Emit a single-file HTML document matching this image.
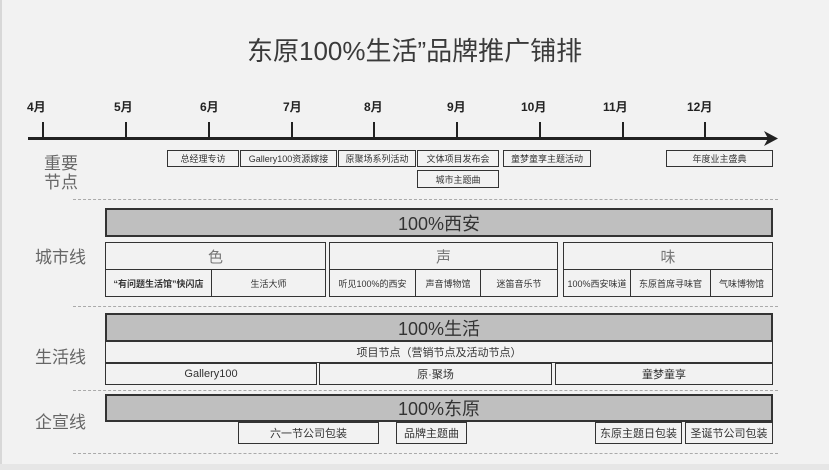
<!DOCTYPE html>
<html><head><meta charset="utf-8"><style>
*{margin:0;padding:0;box-sizing:border-box}
body{width:829px;height:470px;background:#f2f2f2;position:relative;overflow:hidden;font-family:"Liberation Sans","Noto Sans CJK SC",sans-serif;color:#333}
.a{position:absolute}
.b{position:absolute;border:1.5px solid #333;display:flex;align-items:center;justify-content:center;font-size:9px;color:#333;white-space:nowrap;background:#f2f2f2}
.g{background:#bfbfbf;border:2px solid #333;font-size:18px;color:#333}
.m{position:absolute;top:98px;font-size:12px;font-weight:bold;color:#222}
.t{position:absolute;top:122px;width:2px;height:16px;background:#222}
.d{position:absolute;left:73px;width:705px;border-top:1px dashed #aaa}
.l{position:absolute;font-size:17px;color:#666}
</style></head><body>
<div class="a" style="left:0;top:0;width:2px;height:470px;background:#d8d8d8"></div>
<div class="a" style="left:0;top:464px;width:829px;height:6px;background:#e6e6e6"></div>
<div class="a" style="left:247px;top:31px;font-size:26px;color:#3a3a3a;white-space:nowrap">东原100%生活”品牌推广铺排</div>

<div class="m" style="left:27px">4月</div><div class="m" style="left:114px">5月</div><div class="m" style="left:200px">6月</div><div class="m" style="left:283px">7月</div><div class="m" style="left:364px">8月</div><div class="m" style="left:447px">9月</div><div class="m" style="left:521px">10月</div><div class="m" style="left:603px">11月</div><div class="m" style="left:687px">12月</div>
<div class="t" style="left:42px"></div><div class="t" style="left:125px"></div><div class="t" style="left:208px"></div><div class="t" style="left:291px"></div><div class="t" style="left:373px"></div><div class="t" style="left:456px"></div><div class="t" style="left:539px"></div><div class="t" style="left:622px"></div><div class="t" style="left:704px"></div>
<div class="a" style="left:28px;top:137px;width:740px;height:3px;background:#222"></div>
<svg class="a" style="left:764px;top:131px" width="16" height="15"><path d="M0 0 L14 7.5 L0 15 L4 7.5Z" fill="#222"/></svg>

<div class="l" style="left:44px;top:154px;line-height:19px">重要<br>节点</div>
<div class="b" style="left:167px;top:150px;width:72px;height:17px">总经理专访</div>
<div class="b" style="left:240px;top:150px;width:97px;height:17px">Gallery100资源嫁接</div>
<div class="b" style="left:338px;top:150px;width:78px;height:17px">原聚场系列活动</div>
<div class="b" style="left:417px;top:150px;width:82px;height:17px">文体项目发布会</div>
<div class="b" style="left:503px;top:150px;width:88px;height:17px">童梦童享主题活动</div>
<div class="b" style="left:666px;top:150px;width:107px;height:17px">年度业主盛典</div>
<div class="b" style="left:417px;top:170px;width:82px;height:18px">城市主题曲</div>
<div class="d" style="top:199px"></div>

<div class="l" style="left:35px;top:243px">城市线</div>
<div class="b g" style="left:105px;top:208px;width:668px;height:29px">100%西安</div>
<div class="b" style="left:105px;top:242px;width:221px;height:28px;font-size:15px;color:#777">色</div>
<div class="b" style="left:105px;top:269px;width:107px;height:28px;font-weight:bold">“有问题生活馆”快闪店</div>
<div class="b" style="left:211px;top:269px;width:115px;height:28px">生活大师</div>
<div class="b" style="left:329px;top:242px;width:229px;height:28px;font-size:15px;color:#777">声</div>
<div class="b" style="left:329px;top:269px;width:87px;height:28px">听见100%的西安</div>
<div class="b" style="left:415px;top:269px;width:66px;height:28px">声音博物馆</div>
<div class="b" style="left:480px;top:269px;width:78px;height:28px">迷笛音乐节</div>
<div class="b" style="left:563px;top:242px;width:210px;height:28px;font-size:15px;color:#777">味</div>
<div class="b" style="left:563px;top:269px;width:68px;height:28px">100%西安味道</div>
<div class="b" style="left:630px;top:269px;width:81px;height:28px">东原首席寻味官</div>
<div class="b" style="left:710px;top:269px;width:63px;height:28px">气味博物馆</div>
<div class="d" style="top:306px"></div>

<div class="l" style="left:35px;top:343px">生活线</div>
<div class="b g" style="left:105px;top:313px;width:668px;height:29px">100%生活</div>
<div class="b" style="left:105px;top:341px;width:668px;height:22px;font-size:11px">项目节点（营销节点及活动节点）</div>
<div class="b" style="left:105px;top:363px;width:212px;height:22px;font-size:11px">Gallery100</div>
<div class="b" style="left:319px;top:363px;width:233px;height:22px;font-size:11px">原·聚场</div>
<div class="b" style="left:555px;top:363px;width:218px;height:22px;font-size:11px">童梦童享</div>
<div class="d" style="top:390px"></div>

<div class="l" style="left:35px;top:408px">企宣线</div>
<div class="b g" style="left:105px;top:394px;width:668px;height:28px">100%东原</div>
<div class="b" style="left:238px;top:422px;width:141px;height:22px;font-size:11px">六一节公司包装</div>
<div class="b" style="left:396px;top:422px;width:71px;height:22px;font-size:11px">品牌主题曲</div>
<div class="b" style="left:595px;top:422px;width:87px;height:22px;font-size:11px">东原主题日包装</div>
<div class="b" style="left:685px;top:422px;width:88px;height:22px;font-size:11px">圣诞节公司包装</div>
<div class="d" style="top:453px"></div>
</body></html>
